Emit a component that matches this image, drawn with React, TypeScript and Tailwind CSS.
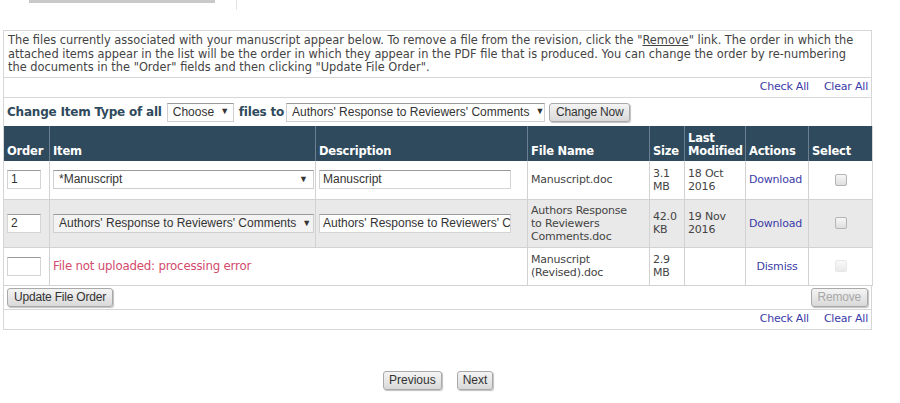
import React from 'react'

const ui = { fontFamily: '"DejaVu Sans", Verdana, sans-serif' }
const ctl = { fontFamily: '"Liberation Sans", Arial, sans-serif' }

function Btn({ label, disabled = false, tight = false }: { label: string; disabled?: boolean; tight?: boolean }) {
  return (
    <button
      style={ctl}
      className={`h-[19px] rounded-[3px] border border-[#a9a9a9] bg-gradient-to-b from-[#f4f4f4] to-[#d9d9d9] ${
        tight ? 'px-[5px]' : 'px-[6px]'
      } text-[12px] leading-none shadow-[1px_1px_1px_rgba(0,0,0,0.25)] ${disabled ? 'text-[#a8a8a8]' : 'text-[#333]'}`}
    >
      {label}
    </button>
  )
}

function FakeSelect({ value, className = '' }: { value: string; className?: string }) {
  return (
    <div
      style={ctl}
      className={`flex h-[19px] items-center justify-between overflow-hidden whitespace-nowrap border border-[#cfcfcf] border-t-[#9a9a9a] px-[5px] text-[12px] tracking-normal text-[#333] ${className}`}
    >
      <span>{value}</span>
      <span className="ml-[6px] text-[9px]">▼</span>
    </div>
  )
}

function TextBox({ value, className = '' }: { value: string; className?: string }) {
  return (
    <div
      style={ctl}
      className={`flex h-[19px] items-center overflow-hidden whitespace-nowrap border border-[#d4d4d4] border-t-[#9a9a9a] bg-white px-[3px] text-[12px] tracking-normal text-[#333] ${className}`}
    >
      {value}
    </div>
  )
}

function Check({ faded = false }: { faded?: boolean }) {
  return (
    <div
      className={`mx-auto h-[12px] w-[12px] rounded-[2px] border bg-gradient-to-b from-[#f6f6f6] to-[#dedede] ${
        faded ? 'border-[#d8d8d8] opacity-60' : 'border-[#b4b4b4]'
      }`}
    />
  )
}

function CheckLinks() {
  return (
    <div className="flex h-[20px] items-center justify-end gap-[15px] border-x border-b border-[#d6d6d6] pr-[3px] text-[11px] text-[#3b3ba8]">
      <span>Check All</span>
      <span>Clear All</span>
    </div>
  )
}

const th = 'border-r border-[#6b8091] px-[3px] pb-[3px] text-left align-bottom text-[11.5px] font-bold leading-[13px] text-white'
const td = 'border-r border-b border-[#d2d2d2] px-[3px] align-middle'

export default function App() {
  return (
    <div style={ui} className="relative h-[403px] w-[900px] bg-white text-[#444]">
      {/* leftover bits of the page above */}
      <div className="ml-[29px] h-[3px] w-[186px] bg-[#c9c9c9]" />
      <div className="absolute left-[236px] top-0 h-[10px] w-px bg-[#e4e4e4]" />

      <div className="ml-[3px] mt-[27px] w-[869px] tracking-[-0.2px]">
        <div className="h-[48px] border border-[#d6d6d6] px-[4px] pt-[3px] text-[11.4px] leading-[13.5px] tracking-normal text-[#444]">
          The files currently associated with your manuscript appear below. To remove a file from the revision, click the "
          <span className="underline">Remove</span>" link. The order in which the attached items appear in the list will be the
          order in which they appear in the PDF file that is produced. You can change the order by re-numbering the documents in
          the "Order" fields and then clicking "Update File Order".
        </div>

        <CheckLinks />

        <div className="flex h-[28px] items-center border-x border-[#d6d6d6] pl-[3px] text-[12px] font-bold text-[#2f4a5c]">
          <span>Change Item Type of all</span>
          <FakeSelect value="Choose" className="ml-[5px] w-[67px] bg-white font-normal" />
          <span className="ml-[5px]">files to</span>
          <FakeSelect value="Authors' Response to Reviewers' Comments" className="ml-[2px] w-[259px] bg-white font-normal" />
          <div className="ml-[4px] font-normal">
            <Btn label="Change Now" />
          </div>
        </div>

        <table className="w-[869px] table-fixed border-collapse border-x border-[#d6d6d6]">
          <colgroup>
            <col className="w-[46px]" />
            <col className="w-[266px]" />
            <col className="w-[212px]" />
            <col className="w-[122px]" />
            <col className="w-[35px]" />
            <col className="w-[61px]" />
            <col className="w-[63px]" />
            <col className="w-[64px]" />
          </colgroup>
          <thead>
            <tr className="h-[35px] bg-[#2f4a5c]">
              <th className={th}>Order</th>
              <th className={th}>Item</th>
              <th className={th}>Description</th>
              <th className={th}>File Name</th>
              <th className={th}>Size</th>
              <th className={th}>
                Last
                <br />
                Modified
              </th>
              <th className={th}>Actions</th>
              <th className={`${th} border-r-0`}>Select</th>
            </tr>
          </thead>
          <tbody className="text-[11px] leading-[13px] text-[#444]">
            <tr className="h-[38px] bg-white">
              <td className={td}>
                <TextBox value="1" className="w-[34px]" />
              </td>
              <td className={td}>
                <FakeSelect value="*Manuscript" className="w-[261px] bg-white" />
              </td>
              <td className={td}>
                <TextBox value="Manuscript" className="w-[192px]" />
              </td>
              <td className={td}>Manuscript.doc</td>
              <td className={td}>
                3.1
                <br />
                MB
              </td>
              <td className={td}>
                18 Oct
                <br />
                2016
              </td>
              <td className={`${td} text-[#3b3ba8]`}>Download</td>
              <td className={`${td} border-r-0`}>
                <Check />
              </td>
            </tr>
            <tr className="h-[48px] bg-[#e9e9e9]">
              <td className={td}>
                <TextBox value="2" className="w-[34px]" />
              </td>
              <td className={td}>
                <FakeSelect value="Authors' Response to Reviewers' Comments" className="w-[261px] bg-[#f3f3f3]" />
              </td>
              <td className={td}>
                <TextBox value="Authors' Response to Reviewers' Comments" className="w-[192px]" />
              </td>
              <td className={td}>
                Authors Response
                <br />
                to Reviewers
                <br />
                Comments.doc
              </td>
              <td className={td}>
                42.0
                <br />
                KB
              </td>
              <td className={td}>
                19 Nov
                <br />
                2016
              </td>
              <td className={`${td} text-[#3b3ba8]`}>Download</td>
              <td className={`${td} border-r-0`}>
                <Check />
              </td>
            </tr>
            <tr className="h-[38px] bg-white">
              <td className={td}>
                <TextBox value="" className="w-[34px]" />
              </td>
              <td colSpan={2} className={`${td} text-[11.8px] text-[#d24a6c]`}>
                File not uploaded: processing error
              </td>
              <td className={td}>
                Manuscript
                <br />
                (Revised).doc
              </td>
              <td className={td}>
                2.9
                <br />
                MB
              </td>
              <td className={td} />
              <td className={`${td} text-center text-[#3b3ba8]`}>Dismiss</td>
              <td className={`${td} border-r-0`}>
                <Check faded />
              </td>
            </tr>
          </tbody>
        </table>

        <div className="flex h-[24px] items-center justify-between border-x border-b border-[#d6d6d6] px-[3px]">
          <Btn label="Update File Order" />
          <Btn label="Remove" disabled />
        </div>

        <CheckLinks />
      </div>

      <div className="ml-[383px] mt-[41px] flex gap-[15px]">
        <Btn label="Previous" tight />
        <Btn label="Next" tight />
      </div>
    </div>
  )
}
